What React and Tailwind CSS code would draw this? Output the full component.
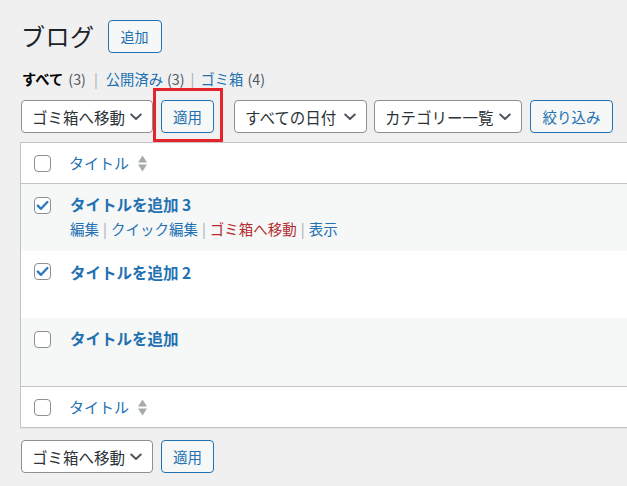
import React from "react";

function Chevron() {
  return (
    <svg width="12" height="8" viewBox="0 0 12 8" className="shrink-0">
      <path d="M1.2 1.5 L6 6 L10.8 1.5" fill="none" stroke="#50575e" strokeWidth="2" strokeLinecap="round" strokeLinejoin="round" />
    </svg>
  );
}

function Select({ label, w }) {
  return (
    <div
      className={`h-[33px] ${w} flex items-center justify-between pl-[10px] pr-[10px] bg-white border border-[#8c8f94] rounded-[4px] text-[15.5px] leading-[20px] text-[#2c3338]`}
    >
      <span>{label}</span>
      <Chevron />
    </div>
  );
}

function Btn({ label, w }) {
  return (
    <div
      className={`h-[33px] ${w} flex items-center justify-center bg-[#f6f7f7] border border-[#2271b1] rounded-[4px] text-[14.5px] leading-[20px] text-[#2271b1]`}
    >
      {label}
    </div>
  );
}

function Checkbox({ checked }) {
  return (
    <div className="w-[17px] h-[17px] bg-white border border-[#8c8f94] rounded-[4px] shrink-0 relative">
      {checked && (
        <svg width="17" height="17" viewBox="0 0 17 17" className="absolute left-[-1px] top-[-1px]">
          <path d="M3.8 8.6 L7 11.8 L13.4 5" fill="none" stroke="#2f7bc0" strokeWidth="2.4" strokeLinecap="round" strokeLinejoin="round" />
        </svg>
      )}
    </div>
  );
}

function SortIcon() {
  return (
    <svg width="9" height="17" viewBox="0 0 9 17" className="ml-[9px]">
      <path d="M4.5 0.5 L9 7.5 L0 7.5 Z" fill="#a7aaad" />
      <path d="M0 9.5 L9 9.5 L4.5 16.5 Z" fill="#a7aaad" />
    </svg>
  );
}

function HeadRow({ border }) {
  return (
    <div className={`h-[41px] flex items-center ${border}`}>
      <div className="w-[41px] pl-[13px] flex items-center">
        <Checkbox />
      </div>
      <div className="pl-[7px] flex items-center text-[15px] leading-[20px] text-[#2271b1]">
        <span>タイトル</span>
        <SortIcon />
      </div>
    </div>
  );
}

function Row({ title, checked, bg, h, cbTop, tTop, actions }) {
  return (
    <div className={`${h} ${bg} flex items-start`}>
      <div className={`w-[41px] pl-[13px] ${cbTop}`}>
        <Checkbox checked={checked} />
      </div>
      <div className={`pl-[8px] ${tTop}`}>
        <div className="text-[15.5px] leading-[22px] font-bold text-[#2271b1]">{title}</div>
        {actions && (
          <div className="mt-[4px] text-[14.5px] leading-[20px] text-[#2271b1] flex items-center">
            <span>編集</span>
            <span className="text-[#a7aaad] mx-[4px]">|</span>
            <span>クイック編集</span>
            <span className="text-[#a7aaad] mx-[4px]">|</span>
            <span className="text-[#b32d2e]">ゴミ箱へ移動</span>
            <span className="text-[#a7aaad] mx-[4px]">|</span>
            <span>表示</span>
          </div>
        )}
      </div>
    </div>
  );
}

export default function App() {
  return (
    <div className="relative w-full min-h-screen h-[486px] overflow-hidden bg-[#f0f0f1] font-['Noto_Sans_CJK_JP','Noto_Sans',sans-serif] text-[#1d2327]">
      <div className="pl-[20px]">
        {/* Title */}
        <div className="mt-[19px] h-[34px] flex items-center">
          <h1 className="text-[24px] leading-[30px] font-normal tracking-[0.5px] text-[#1d2327] pl-[1px]">ブログ</h1>
          <div className="ml-[13px] h-[33px] w-[54px] flex items-center justify-center bg-[#f6f7f7] border border-[#2271b1] rounded-[4px] text-[14px] leading-[20px] text-[#2271b1]">
            追加
          </div>
        </div>

        {/* Subsubsub */}
        <div className="mt-[16px] h-[20px] flex items-center text-[14.3px] leading-[20px] pl-[2px]">
          <span className="font-bold text-[#000]">すべて</span>
          <span className="ml-[5px] text-[#50575e]">(3)</span>
          <span className="mx-[8px] text-[#a7aaad]">|</span>
          <span className="text-[#2271b1]">公開済み</span>
          <span className="ml-[4px] text-[#50575e]">(3)</span>
          <span className="mx-[6px] text-[#a7aaad]">|</span>
          <span className="text-[#2271b1]">ゴミ箱</span>
          <span className="ml-[4px] text-[#50575e]">(4)</span>
        </div>

        {/* Top tablenav */}
        <div className="mt-[11px] h-[33px] flex items-center pl-[1px]">
          <Select label="ゴミ箱へ移動" w="w-[132px]" />
          <div className="ml-[8px]">
            <Btn label="適用" w="w-[53px]" />
          </div>
          <div className="ml-[20px]">
            <Select label="すべての日付" w="w-[133px]" />
          </div>
          <div className="ml-[7px]">
            <Select label="カテゴリー一覧" w="w-[148px]" />
          </div>
          <div className="ml-[8px]">
            <Btn label="絞り込み" w="w-[83px]" />
          </div>
        </div>

        {/* Table */}
        <div className="mt-[9px] w-[640px] bg-white border border-[#c3c4c7] shadow-[0_1px_1px_rgba(0,0,0,0.04)]">
          <HeadRow border="border-b border-[#c3c4c7]" />
          <Row
            title="タイトルを追加 3"
            checked
            bg="bg-[#f6f7f7]"
            h="h-[67px]"
            cbTop="pt-[13px]"
            tTop="pt-[9px]"
            actions
          />
          <Row
            title="タイトルを追加 2"
            checked
            bg="bg-white"
            h="h-[67px]"
            cbTop="pt-[12px]"
            tTop="pt-[10px]"
          />
          <Row
            title="タイトルを追加"
            bg="bg-[#f6f7f7]"
            h="h-[68px]"
            cbTop="pt-[13px]"
            tTop="pt-[9px]"
          />
          <div className="border-t border-[#c3c4c7]">
            <div className="h-[40px] flex items-center">
              <div className="w-[41px] pl-[13px] flex items-center">
                <Checkbox />
              </div>
              <div className="pl-[7px] flex items-center text-[15px] leading-[20px] text-[#2271b1]">
                <span>タイトル</span>
                <SortIcon />
              </div>
            </div>
          </div>
        </div>

        {/* Bottom tablenav */}
        <div className="mt-[12px] h-[33px] flex items-center pl-[1px]">
          <Select label="ゴミ箱へ移動" w="w-[132px]" />
          <div className="ml-[8px]">
            <Btn label="適用" w="w-[53px]" />
          </div>
        </div>
      </div>

      {/* Red annotation box */}
      <div className="absolute left-[153px] top-[88px] w-[70px] h-[54px] border-[3px] border-[#e3242b]" />
    </div>
  );
}
